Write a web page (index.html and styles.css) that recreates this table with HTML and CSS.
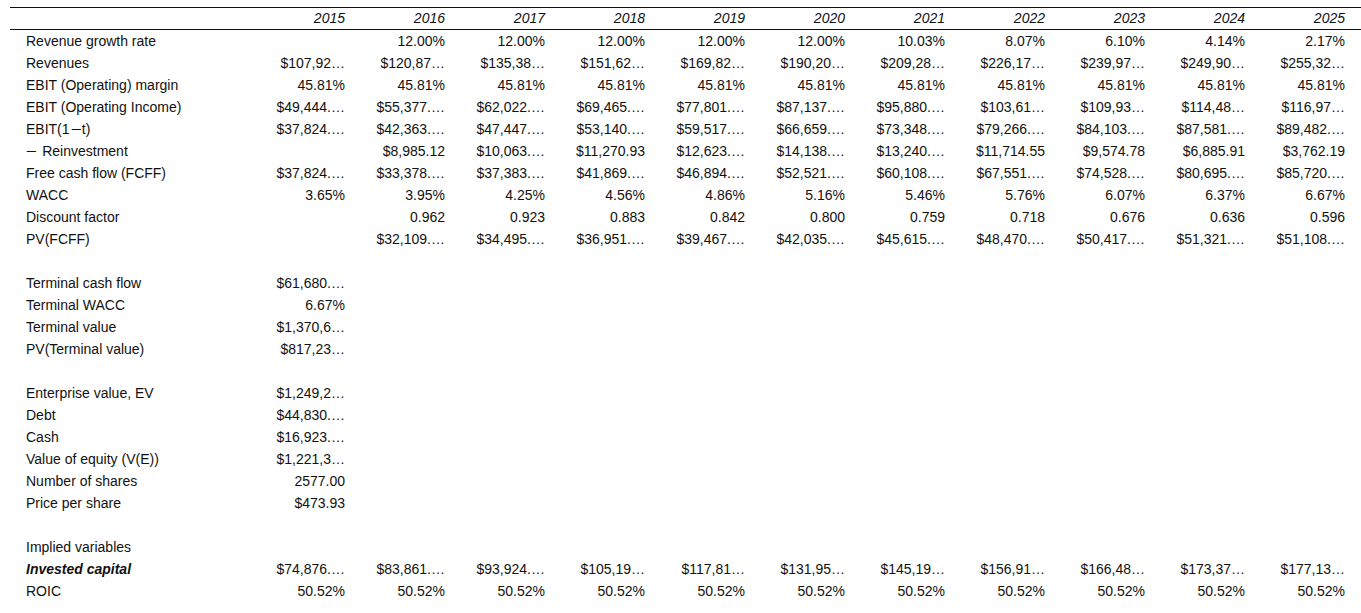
FILE: index.html
```html
<!DOCTYPE html>
<html>
<head>
<meta charset="utf-8">
<link rel="stylesheet" href="styles.css">
</head>
<body>
<table class="dcf">
<colgroup><col class="c-label"><col span="11" class="c-val"></colgroup>
<thead>
<tr><th></th><th>2015</th><th>2016</th><th>2017</th><th>2018</th><th>2019</th><th>2020</th><th>2021</th><th>2022</th><th>2023</th><th>2024</th><th>2025</th></tr>
</thead>
<tbody>
<tr><td>Revenue growth rate</td><td></td><td>12.00%</td><td>12.00%</td><td>12.00%</td><td>12.00%</td><td>12.00%</td><td>10.03%</td><td>8.07%</td><td>6.10%</td><td>4.14%</td><td>2.17%</td></tr>
<tr><td>Revenues</td><td>$107,92…</td><td>$120,87…</td><td>$135,38…</td><td>$151,62…</td><td>$169,82…</td><td>$190,20…</td><td>$209,28…</td><td>$226,17…</td><td>$239,97…</td><td>$249,90…</td><td>$255,32…</td></tr>
<tr><td>EBIT (Operating) margin</td><td>45.81%</td><td>45.81%</td><td>45.81%</td><td>45.81%</td><td>45.81%</td><td>45.81%</td><td>45.81%</td><td>45.81%</td><td>45.81%</td><td>45.81%</td><td>45.81%</td></tr>
<tr><td>EBIT (Operating Income)</td><td>$49,444.…</td><td>$55,377.…</td><td>$62,022.…</td><td>$69,465.…</td><td>$77,801.…</td><td>$87,137.…</td><td>$95,880.…</td><td>$103,61…</td><td>$109,93…</td><td>$114,48…</td><td>$116,97…</td></tr>
<tr><td>EBIT(1<span class="minus">&#8722;</span>t)</td><td>$37,824.…</td><td>$42,363.…</td><td>$47,447.…</td><td>$53,140.…</td><td>$59,517.…</td><td>$66,659.…</td><td>$73,348.…</td><td>$79,266.…</td><td>$84,103.…</td><td>$87,581.…</td><td>$89,482.…</td></tr>
<tr><td><span class="minus lead">&#8722;</span>Reinvestment</td><td></td><td>$8,985.12</td><td>$10,063.…</td><td>$11,270.93</td><td>$12,623.…</td><td>$14,138.…</td><td>$13,240.…</td><td>$11,714.55</td><td>$9,574.78</td><td>$6,885.91</td><td>$3,762.19</td></tr>
<tr><td>Free cash flow (FCFF)</td><td>$37,824.…</td><td>$33,378.…</td><td>$37,383.…</td><td>$41,869.…</td><td>$46,894.…</td><td>$52,521.…</td><td>$60,108.…</td><td>$67,551.…</td><td>$74,528.…</td><td>$80,695.…</td><td>$85,720.…</td></tr>
<tr><td>WACC</td><td>3.65%</td><td>3.95%</td><td>4.25%</td><td>4.56%</td><td>4.86%</td><td>5.16%</td><td>5.46%</td><td>5.76%</td><td>6.07%</td><td>6.37%</td><td>6.67%</td></tr>
<tr><td>Discount factor</td><td></td><td>0.962</td><td>0.923</td><td>0.883</td><td>0.842</td><td>0.800</td><td>0.759</td><td>0.718</td><td>0.676</td><td>0.636</td><td>0.596</td></tr>
<tr><td>PV(FCFF)</td><td></td><td>$32,109.…</td><td>$34,495.…</td><td>$36,951.…</td><td>$39,467.…</td><td>$42,035.…</td><td>$45,615.…</td><td>$48,470.…</td><td>$50,417.…</td><td>$51,321.…</td><td>$51,108.…</td></tr>
<tr class="blank"><td colspan="12"></td></tr>
<tr><td>Terminal cash flow</td><td>$61,680.…</td><td colspan="10"></td></tr>
<tr><td>Terminal WACC</td><td>6.67%</td><td colspan="10"></td></tr>
<tr><td>Terminal value</td><td>$1,370,6…</td><td colspan="10"></td></tr>
<tr><td>PV(Terminal value)</td><td>$817,23…</td><td colspan="10"></td></tr>
<tr class="blank"><td colspan="12"></td></tr>
<tr><td>Enterprise value, EV</td><td>$1,249,2…</td><td colspan="10"></td></tr>
<tr><td>Debt</td><td>$44,830.…</td><td colspan="10"></td></tr>
<tr><td>Cash</td><td>$16,923.…</td><td colspan="10"></td></tr>
<tr><td>Value of equity (V(E))</td><td>$1,221,3…</td><td colspan="10"></td></tr>
<tr><td>Number of shares</td><td>2577.00</td><td colspan="10"></td></tr>
<tr><td>Price per share</td><td>$473.93</td><td colspan="10"></td></tr>
<tr class="blank"><td colspan="12"></td></tr>
<tr><td colspan="12">Implied variables</td></tr>
<tr class="strong"><td>Invested capital</td><td>$74,876.…</td><td>$83,861.…</td><td>$93,924.…</td><td>$105,19…</td><td>$117,81…</td><td>$131,95…</td><td>$145,19…</td><td>$156,91…</td><td>$166,48…</td><td>$173,37…</td><td>$177,13…</td></tr>
<tr><td>ROIC</td><td>50.52%</td><td>50.52%</td><td>50.52%</td><td>50.52%</td><td>50.52%</td><td>50.52%</td><td>50.52%</td><td>50.52%</td><td>50.52%</td><td>50.52%</td><td>50.52%</td></tr>
</tbody>
</table>
</body>
</html>
```

FILE: styles.css
```css
html, body {
  margin: 0;
  background: #ffffff;
}
body {
  padding: 7px 0 0 10px;
  font-family: "Liberation Sans", Arial, sans-serif;
  font-size: 14px;
  color: #111111;
}
.dcf {
  border-collapse: collapse;
  table-layout: fixed;
  width: 1351px;
}
.c-label { width: 251px; }
.c-val { width: 100px; }
.dcf th {
  font-weight: normal;
  font-style: italic;
  text-align: right;
  height: 21px;
  padding: 0 16px 0 0;
  border-top: 1px solid #111;
  border-bottom: 1px solid #111;
  line-height: 21px;
}
.dcf td {
  height: 22px;
  line-height: 22px;
  padding: 0 16px 0 0;
  text-align: right;
  white-space: nowrap;
}
.dcf td:first-child {
  text-align: left;
  padding: 0 0 0 16px;
}
.dcf tr.strong td:first-child {
  font-weight: bold;
  font-style: italic;
}
.minus {
  display: inline-block;
  margin: 0 2px;
  transform: scaleX(1.35);
}
.minus.lead {
  margin: 0 7px 0 1px;
}
```
